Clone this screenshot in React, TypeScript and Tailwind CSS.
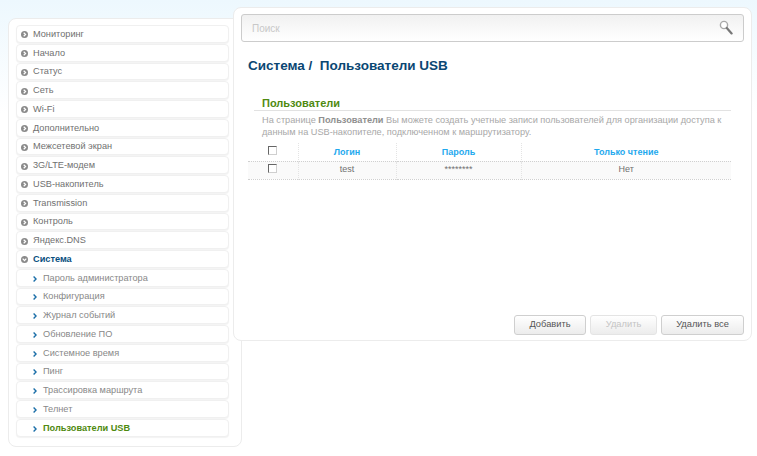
const menu = [
  'Мониторинг',
  'Начало',
  'Статус',
  'Сеть',
  'Wi-Fi',
  'Дополнительно',
  'Межсетевой экран',
  '3G/LTE-модем',
  'USB-накопитель',
  'Transmission',
  'Контроль',
  'Яндекс.DNS',
];

const submenu = [
  'Пароль администратора',
  'Конфигурация',
  'Журнал событий',
  'Обновление ПО',
  'Системное время',
  'Пинг',
  'Трассировка маршрута',
  'Телнет',
];

function Bullet({ open }: { open?: boolean }) {
  return (
    <svg width="7" height="7" viewBox="0 0 7 7" className="shrink-0">
      <circle cx="3.5" cy="3.5" r="3.5" fill="#8a8a8a" />
      <path
        d={open ? 'M1.7 2.7 L3.5 4.6 L5.3 2.7' : 'M2.7 1.7 L4.6 3.5 L2.7 5.3'}
        fill="none"
        stroke="#fff"
        strokeWidth="1.2"
      />
    </svg>
  );
}

function Chevron() {
  return (
    <svg width="4" height="6" viewBox="0 0 4 6" className="shrink-0">
      <path d="M0.6 0.6 L3 3 L0.6 5.4" fill="none" stroke="#1a6ea8" strokeWidth="1.4" />
    </svg>
  );
}

function Row({ children, className = '' }: { children: React.ReactNode; className?: string }) {
  return (
    <div
      className={`flex items-center h-[17.76px] mb-px pt-[2px] rounded-[4px] border border-[#f0f0f0] bg-white shadow-[0_1px_1px_#f3f3f3] ${className}`}
    >
      {children}
    </div>
  );
}

function Checkbox() {
  return (
    <div className="flex justify-center -mt-[3px]">
      <span className="block w-[9px] h-[9px] border border-r-[#cfcfcf] border-b-[#cfcfcf] border-t-[#666] border-l-[#666] bg-white" />
    </div>
  );
}

function Btn({ label, disabled, width }: { label: string; disabled?: boolean; width: string }) {
  return (
    <button
      className={`h-[20px] rounded-[3px] border text-[9.3px] bg-gradient-to-b from-white to-[#ececec] ${width} ${
        disabled ? 'border-[#e4e4e4] text-[#c4c4c4]' : 'border-[#cfcfcf] text-[#555]'
      }`}
    >
      {label}
    </button>
  );
}

export default function App() {
  return (
    <div className="w-[757px] h-[456px] overflow-hidden bg-gradient-to-b from-[#edf8fe] via-white via-[25%] to-white font-['Liberation_Sans',Arial,sans-serif] flex items-start pl-2 pt-[7px]">
      <aside className="w-[234px] mt-[11px] shrink-0 rounded-[8px] border border-[#ececec] bg-white pl-[7px] pr-[12px] pt-[6px] pb-[8px]">
        {menu.map((item) => (
          <Row key={item} className="pl-[4px] gap-[5px]">
            <Bullet />
            <span className="text-[9.2px] text-[#707070]">{item}</span>
          </Row>
        ))}
        <Row className="pl-[4px] gap-[5px]">
          <Bullet open />
          <span className="text-[9.2px] font-bold text-[#0a4f80]">Система</span>
        </Row>
        {submenu.map((item) => (
          <Row key={item} className="pl-[16px] gap-[6px]">
            <Chevron />
            <span className="text-[9.2px] text-[#888]">{item}</span>
          </Row>
        ))}
        <Row className="pl-[16px] gap-[6px]">
          <Chevron />
          <span className="text-[9.2px] font-bold text-[#4f8a10]">Пользователи USB</span>
        </Row>
      </aside>

      <main className="relative -ml-[9px] w-[519px] h-[334px] flex flex-col rounded-[8px] border border-[#ececec] bg-white px-[7px] pt-[6px] pb-[6px]">
        <div className="flex items-center justify-between h-[28px] shrink-0 rounded-[3px] border border-[#cccccc] bg-gradient-to-b from-[#f1f1f1] to-white pl-[10px] pr-[10px]">
          <span className="text-[10px] text-[#c8c8c8]">Поиск</span>
          <svg width="14" height="15" viewBox="0 0 14 15" className="-mt-[2px]">
            <circle cx="5" cy="5" r="3.6" fill="#fff" stroke="#a8a8a8" strokeWidth="1.4" />
            <path d="M7.8 8 L12.6 13.4" stroke="#777" strokeWidth="2.2" strokeLinecap="round" />
          </svg>
        </div>

        <h1 className="mt-[16px] ml-[7px] text-[13.5px] leading-[16px] font-bold text-[#0a4773] whitespace-pre">
          Система /  Пользователи USB
        </h1>

        <section className="mt-[22px] ml-[13px] mr-[13px]">
          <h2 className="pl-[8px] h-[15px] leading-[14px] text-[11px] font-bold text-[#4f8a10] border-b border-[#e2e2e2]">
            Пользователи
          </h2>
          <p className="mt-[3px] pl-[8px] text-[9.2px] leading-[12px] text-[#a8a8a8]">
            На странице <b className="text-[#8f8f8f]">Пользователи</b> Вы можете создать учетные записи пользователей для организации доступа к
            данным на USB-накопителе, подключенном к маршрутизатору.
          </p>

          <table className="mt-[5px] -ml-[6px] w-[483px] table-fixed border-collapse text-[9px]">
            <colgroup>
              <col className="w-[50px]" />
              <col className="w-[98px]" />
              <col className="w-[125px]" />
              <col />
            </colgroup>
            <thead>
              <tr className="h-[18px] text-[#1fa9ee] font-bold border-b border-dotted border-[#d0d0d0]">
                <th className="pt-[1px] border-r border-dotted border-[#e4e4e4]">
                  <Checkbox />
                </th>
                <th className="pt-[1px] border-r border-dotted border-[#e4e4e4]">Логин</th>
                <th className="pt-[1px] border-r border-dotted border-[#e4e4e4]">Пароль</th>
                <th className="pt-[1px]">Только чтение</th>
              </tr>
            </thead>
            <tbody>
              <tr className="h-[18px] bg-[#fafafa] text-[#707070] text-center border-b border-dotted border-[#d0d0d0]">
                <td className="border-r border-dotted border-[#e4e4e4]">
                  <Checkbox />
                </td>
                <td className="border-r border-dotted border-[#e4e4e4]">test</td>
                <td className="border-r border-dotted border-[#e4e4e4]">********</td>
                <td>Нет</td>
              </tr>
            </tbody>
          </table>
        </section>

        <div className="mt-auto flex justify-end gap-[4px] -mb-px">
          <Btn label="Добавить" width="w-[72px]" />
          <Btn label="Удалить" disabled width="w-[67px]" />
          <Btn label="Удалить все" width="w-[83px]" />
        </div>
      </main>
    </div>
  );
}
